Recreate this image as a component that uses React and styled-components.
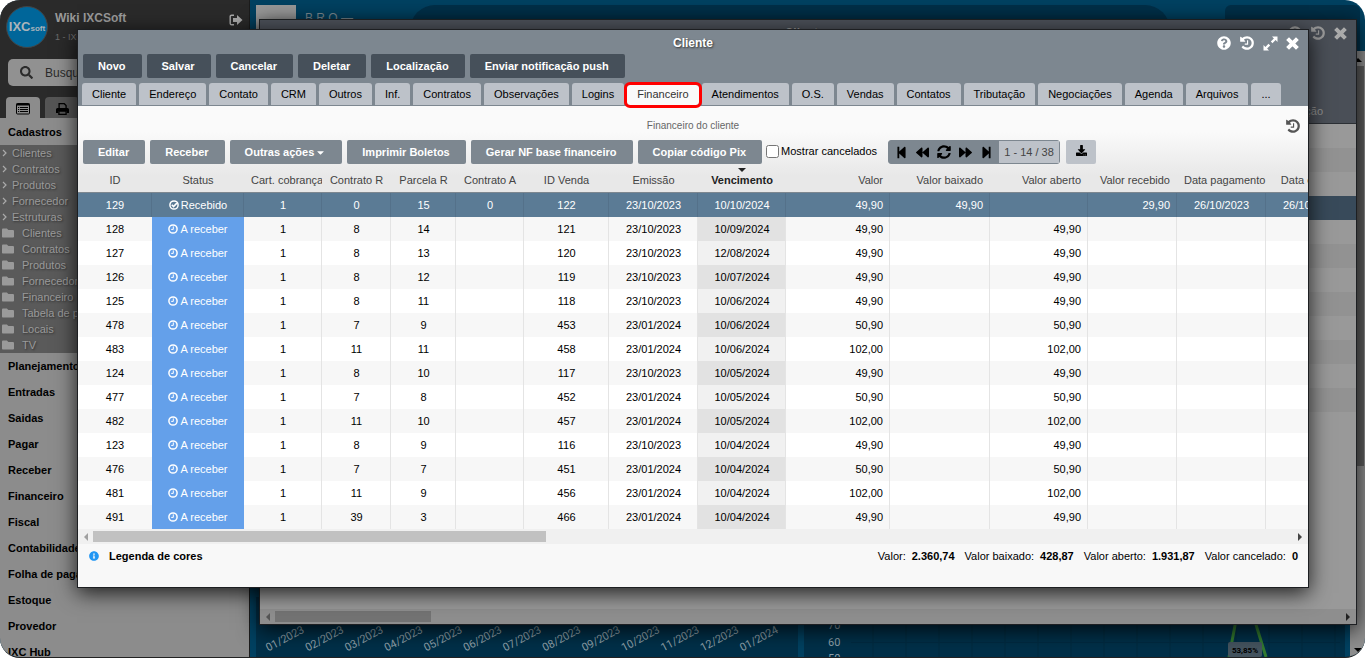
import React from 'react'
import styled, { createGlobalStyle, css } from 'styled-components'
import {
  FaBackward,
  FaCaretDown,
  FaDownload,
  FaFolder,
  FaForward,
  FaInfoCircle,
  FaQuestionCircle,
  FaSearch,
  FaStepBackward,
  FaStepForward,
  FaSyncAlt,
} from 'react-icons/fa'

const colors = {
  slate: '#7d8790',
  slateDark: '#46505a',
  tab: '#bdc2c9',
  selected: '#5b7b95',
  receivable: '#64a0ea',
  navy: '#003049',
  blue: '#004161',
}

const GlobalStyle = createGlobalStyle`
  * {
    box-sizing: border-box;
  }

  body {
    margin: 0;
    background-color: #fff;
    color: #000;
    font-family: 'Liberation Sans', Arial, sans-serif;
    font-size: 11px;
  }

  button, input {
    font-family: inherit;
  }
`

const Desktop = styled.div`
  position: relative;
  display: flex;
  height: 100vh;
  overflow: hidden;
  border-radius: 20px;
  border-bottom: 1px solid #222;
  background-color: ${colors.blue};
`

/* ---------- sidebar ---------- */

const Sidebar = styled.aside`
  flex: 0 0 250px;
  overflow: hidden;
  background-color: #8c8c8c;
  border-right: 1px solid #1c1c1c;
`

const SidebarTop = styled.div`
  height: 118px;
  background-color: #2a2a2a;
`

const User = styled.div`
  display: flex;
  align-items: center;
  gap: 7px;
  height: 53px;
  padding: 0 6px;

  > button {
    margin-bottom: 14px;
  }
`

const Logo = styled.div`
  display: flex;
  flex: none;
  align-items: baseline;
  justify-content: center;
  width: 42px;
  height: 42px;
  border: 1px solid #444;
  border-radius: 50%;
  background-color: #00669a;
  color: #aab4ba;
  font-size: 13px;
  font-weight: bold;
  line-height: 40px;

  > small {
    font-size: 8px;
  }
`

const UserText = styled.div`
  flex: 1;
  padding-top: 3px;
  color: #6d6d6d;
  font-size: 9px;
  line-height: 19px;
  white-space: nowrap;

  > strong {
    display: block;
    color: #9a9a9a;
    font-size: 12px;
  }
`

const IconButton = styled.button`
  display: flex;
  padding: 0;
  border: 0;
  background: none;
  color: ${props => props.$color || '#fff'};
`

const SearchBox = styled.label`
  display: flex;
  align-items: center;
  gap: 12px;
  height: 27px;
  margin: 6px 8px 0;
  padding: 0 12px;
  border-radius: 5px;
  background-color: #919191;
  color: #2b2b2b;

  > svg {
    flex: none;
  }

  > input {
    width: 100%;
    padding: 0;
    border: 0;
    outline: 0;
    background: none;
    font-size: 12px;
  }

  > input::placeholder {
    color: #2b2b2b;
  }
`

const SideTabs = styled.div`
  display: flex;
  gap: 5px;
  padding: 11px 6px 0;
`

const SideTab = styled.button`
  display: flex;
  align-items: center;
  justify-content: center;
  width: 34px;
  height: 21px;
  padding: 2px 0 0;
  border: 0;
  border-radius: 4px 4px 0 0;
  background-color: ${props => (props.$active ? '#8c8c8c' : '#555')};
  color: #000;
`

const MenuTitle = styled.a`
  display: block;
  height: 26px;
  padding-left: 8px;
  color: #000;
  font-weight: bold;
  line-height: 26px;
  text-decoration: none;
  white-space: nowrap;
`

const FirstMenuTitle = styled(MenuTitle)`
  height: 27px;
  line-height: 28px;
`

const SubMenu = styled.div`
  background-color: #5a5a5a;
`

const SubMenuItem = styled.a`
  display: flex;
  align-items: center;
  gap: ${props => (props.$folder ? 8 : 5)}px;
  height: 16px;
  padding-left: 2px;
  color: #9a9a9a;
  text-decoration: none;
  text-shadow: 1px 1px 2px #333;
  white-space: nowrap;

  > svg {
    flex: none;
  }
`

/* ---------- dashboard behind the windows ---------- */

const Dashboard = styled.main`
  display: flex;
  flex: 1;
  flex-direction: column;
  min-width: 0;
`

const DashboardTop = styled.div`
  display: flex;
  flex: none;
  align-items: flex-start;
  height: 51px;
  padding: 5px 5px 0 6px;
`

const Thumb = styled.div`
  width: 40px;
  height: 46px;
  background-color: #999;
`

const Brand = styled.div`
  width: 114px;
  padding: 6px 0 0 9px;
  color: #7d8b93;
  font-size: 12px;
  white-space: nowrap;
`

const TopCard = styled.div`
  flex: ${props => props.$grow};
  height: 46px;
  margin-right: ${props => props.$gap}px;
  border-radius: ${props => props.$radius}px ${props => props.$radius}px 0 0;
  background-color: ${colors.navy};
`

const DashboardBody = styled.div`
  display: flex;
  flex: 1;
  min-height: 0;
`

const Charts = styled.div`
  display: flex;
  flex: 1;
  align-items: flex-end;
  gap: 6px;
  min-width: 0;
  padding: 0 5px 0 6px;
`

const ChartPanel = styled.div`
  flex: 1 1 0;
  min-width: 0;
  height: 60px;
  background-color: ${colors.navy};

  > svg {
    display: block;
  }

  text {
    fill: #8fa0aa;
    font-family: Roboto, sans-serif;
    font-size: 11px;
  }
`

const VerticalScroll = styled.div`
  display: flex;
  flex: 0 0 15px;
  flex-direction: column;
  align-items: center;
  justify-content: space-between;
  padding: 5px 0 3px;
  background-color: #8e8e8e;
`

const VerticalThumb = styled.div`
  flex: 0 0 400px;
  width: 13px;
  margin: 2px 0 auto;
  background-color: #5e5e5e;
`

/* ---------- windows ---------- */

const Window = styled.section`
  position: absolute;
  top: ${props => props.$top}px;
  right: ${props => props.$right}px;
  left: ${props => props.$left}px;
  overflow: hidden;
  border: 1px solid #1d1f22;
  box-shadow: 0 5px 20px rgba(0, 0, 0, 0.8);
`

const TitleBar = styled.header`
  display: grid;
  grid-template-columns: 1fr auto 1fr;
  align-items: center;
  height: 24px;
  padding: 2px 9px 0;
`

const Title = styled.h1`
  grid-column: 2;
  margin: 0;
  color: ${props => (props.$dim ? '#999' : '#fff')};
  font-size: 12px;
  text-shadow: 1px 1px 2px #333;
`

const WindowControls = styled.div`
  display: flex;
  align-items: center;
  justify-content: flex-end;
  gap: 8px;
`

const BackHeader = styled.div`
  height: 104px;
  border-bottom: 1px solid #2c3035;
  background-color: #4a4f57;
`

const BackLabel = styled.div`
  padding: 60px 33px 0 0;
  color: #8f8f8f;
  line-height: 14px;
  text-align: right;
`

const BackRow = styled.div`
  height: 24px;
  background-color: ${props =>
    props.$selected ? '#384a5a' : props.$shaded ? '#929292' : '#999'};
`

const BackFiller = styled.div`
  height: 197px;
  background-color: #999;
`

const FrontHeader = styled.div`
  background-color: ${colors.slate};
`

const Actions = styled.div`
  display: flex;
  gap: 5px;
  padding: 0 5px;
`

const Button = styled.button`
  display: flex;
  align-items: center;
  gap: 1px;
  height: 24px;
  padding: 0 16px 0 15px;
  border: 0;
  border-radius: 2px;
  background-color: ${props =>
    props.$dark ? colors.slateDark : colors.slate};
  color: #fff;
  font-size: 11px;
  font-weight: bold;
  white-space: nowrap;
`

const Tabs = styled.nav`
  display: flex;
  align-items: flex-end;
  gap: 3px;
  padding: 5px 4px 0;
  border-bottom: 1px solid ${colors.slate};
`

const Tab = styled.button`
  height: 22px;
  padding: 0 10px;
  border: 0;
  border-radius: 3px 3px 0 0;
  background-color: ${colors.tab};
  color: #000;
  font-size: 11px;
  white-space: nowrap;

  ${props =>
    props.$active &&
    css`
      z-index: 1;
      height: 20px;
      padding-bottom: 3px;
      background-color: #fafafa;
      color: #333;
      outline: 3px solid #f00;
      border-radius: 3px;
    `}
`

const Content = styled.div`
  background: #fff linear-gradient(#fafafa 30%, #e8e8e8 80%) no-repeat 0 0 /
    100% 87px;
`

const SectionHead = styled.div`
  display: grid;
  grid-template-columns: 1fr auto 1fr;
  align-items: center;
  height: 34px;
  padding: 5px 7px 0;
`

const SectionTitle = styled.h2`
  grid-column: 2;
  margin: 0;
  color: #666;
  font-size: 10px;
  font-weight: normal;
`

const Toolbar = styled.div`
  display: flex;
  align-items: center;
  height: 28px;
  padding: 0 5px 4px;
`

const ToolbarActions = styled.div`
  display: flex;
  gap: 5px;
`

const Checkbox = styled.label`
  display: flex;
  align-items: center;
  gap: 2px;
  margin: 0 11px 0 4px;
  padding-bottom: 2px;
  white-space: nowrap;

  > input {
    width: 13px;
    height: 13px;
    margin: 0;
  }
`

const Pager = styled.div`
  display: flex;
  height: 24px;
  margin-right: 6px;
  border: 1px solid ${colors.slate};
  border-radius: 3px;
  background-color: ${colors.slate};
`

const PagerButtons = styled.div`
  display: flex;
  align-items: center;
  justify-content: space-between;
  width: 110px;
  padding: 0 6px;
`

const PagerText = styled.span`
  width: 60px;
  background-color: ${colors.tab};
  color: #444;
  line-height: 22px;
  text-align: center;
`

const DownloadButton = styled.button`
  display: flex;
  align-items: center;
  justify-content: center;
  width: 30px;
  height: 24px;
  padding: 0 0 4px;
  border: 0;
  border-radius: 2px;
  background-color: ${colors.tab};
  color: #000;
`

const TableWrap = styled.div`
  overflow: hidden;
`

const Table = styled.table`
  width: 1277px;
  border-collapse: separate;
  border-spacing: 0;
  table-layout: fixed;
`

const Th = styled.th`
  height: 25px;
  padding: 0 7px;
  border-bottom: 1px solid ${colors.slate};
  color: ${props => (props.$sorted ? '#222' : '#444')};
  font-weight: ${props => (props.$sorted ? 'bold' : 'normal')};
  overflow: hidden;
  text-align: ${props => props.$align};
  white-space: nowrap;
`

const SortMark = styled.svg`
  display: block;
  margin: -6px auto 2px;
`

const Td = styled.td`
  height: 24px;
  padding: 0 6px 0 7px;
  border-right: 1px solid ${props => (props.$blank ? 'transparent' : '#e4e4e4')};
  text-align: ${props => props.$align};
  white-space: nowrap;
`

const Tr = styled.tr`
  background-color: #fff;

  &:nth-child(even) {
    background-color: #f7f7f7;
  }

  &:nth-child(even) > td.sorted {
    background-color: #e2e2e2;
  }

  > td.sorted {
    background-color: #f1f1f1;
  }

  > td.status {
    background-color: ${colors.receivable};
    color: #fff;
  }

  ${props =>
    props.$selected &&
    css`
      && ,
      && > td.sorted,
      && > td.status {
        background-color: ${colors.selected};
        color: #fff;
      }

      && > td {
        border-right-color: #54718a;
      }
    `}
`

const Status = styled.span`
  display: inline-flex;
  align-items: center;
  gap: 2px;
`

const HorizontalScroll = styled.div`
  display: flex;
  align-items: center;
  gap: 3px;
  height: 15px;
  padding: 0 4px;
  background-color: ${props => (props.$dim ? '#8e8e8e' : '#f0f0f0')};
  color: ${props => (props.$dim ? '#555' : '#a0a0a0')};

  > svg:last-child {
    margin-left: auto;
    color: ${props => (props.$dim ? '#222' : '#444')};
  }
`

const HorizontalThumb = styled.div`
  width: ${props => props.$width}px;
  height: 11px;
  background-color: ${props => (props.$dim ? '#737373' : '#c1c1c1')};
`

const Footer = styled.footer`
  display: flex;
  align-items: flex-start;
  justify-content: space-between;
  height: 43px;
  padding: 5px 10px 0 11px;
  background-color: #f8f8f8;
  line-height: 14px;
`

const Legend = styled.a`
  display: flex;
  align-items: center;
  gap: 10px;
  color: #000;
  font-weight: bold;
  text-decoration: none;
`

const Totals = styled.div`
  display: flex;
  gap: 10px;

  > span {
    display: flex;
    gap: 6px;
  }
`

/* ---------- icons ---------- */

const HistoryIcon = () => (
  <svg width="16" height="16" viewBox="0 0 1792 1792" fill="currentColor">
    <path d="M1664 896q0 156-61 298t-164 245-245 164-298 61q-172 0-327-72.5t-264-204.5q-7-10-6.5-22.5t8.5-20.5l137-138q10-9 25-9 16 2 23 12 73 95 179 147t225 52q104 0 198.5-40.5t163.5-109.5 109.5-163.5 40.5-198.5-40.5-198.5-109.5-163.5-163.5-109.5-198.5-40.5q-98 0-188 35.5t-160 101.5l137 138q31 30 14 69-17 40-59 40h-448q-26 0-45-19t-19-45v-448q0-42 40-59 39-17 69 14l130 129q107-101 244.5-156.5t284.5-55.5q156 0 298 61t245 164 164 245 61 298zm-640-288v448q0 14-9 23t-23 9h-320q-14 0-23-9t-9-23v-64q0-14 9-23t23-9h224v-352q0-14 9-23t23-9h64q14 0 23 9t9 23z" />
  </svg>
)

const CloseIcon = () => (
  <svg width="13" height="13" viewBox="0 0 13 13" stroke="currentColor">
    <path d="M1.6 1.6l9.8 9.8M11.4 1.6l-9.8 9.8" strokeWidth="4" />
  </svg>
)

const ExpandIcon = () => (
  <svg width="15" height="15" viewBox="0 0 15 15" fill="currentColor">
    <path d="M9 0.5h5.5V6l-1.9-1.9-3.1 3.1-1.7-1.7 3.1-3.1zM6 14.5H0.5V9l1.9 1.9 3.1-3.1 1.7 1.7-3.1 3.1z" />
  </svg>
)

const ExitIcon = () => (
  <svg width="14" height="12" viewBox="0 0 14 12">
    <path
      d="M5 1.2H2.6Q1.2 1.2 1.2 2.6v6.8q0 1.4 1.4 1.4H5"
      fill="none"
      stroke="currentColor"
      strokeWidth="1.4"
    />
    <path d="M4 4h4V1l5.5 5L8 11V8H4z" fill="currentColor" />
  </svg>
)

const ListIcon = () => (
  <svg width="14" height="12" viewBox="0 0 14 12" stroke="currentColor">
    <rect x="0.5" y="0.5" width="13" height="10.5" rx="1" fill="none" />
    <path d="M0.5 1.5h13" strokeWidth="2" />
    <path d="M2 4.5h1.2M4 4.5h8M2 6.5h1.2M4 6.5h8M2 8.5h1.2M4 8.5h8" />
  </svg>
)

const PrinterIcon = () => (
  <svg width="13" height="12" viewBox="0 0 13 12">
    <path
      d="M3.1 5.5V0.7h5.2l1.8 1.8v3"
      fill="none"
      stroke="currentColor"
      strokeWidth="1.3"
    />
    <path
      d="M1.5 5h10Q13 5 13 6.5V10h-2.3V8H2.3v2H0V6.5Q0 5 1.5 5z"
      fill="currentColor"
    />
    <path
      d="M2.9 8h7.2v3.3H2.9z"
      fill="none"
      stroke="currentColor"
      strokeWidth="1.3"
    />
  </svg>
)

const ClockIcon = () => (
  <svg width="10" height="10" viewBox="0 0 10 10" fill="none" stroke="#fff">
    <circle cx="5" cy="5" r="4.1" strokeWidth="1.5" />
    <path d="M5.3 2.4v3H3.2" strokeWidth="1" />
  </svg>
)

const CheckIcon = () => (
  <svg width="10" height="10" viewBox="0 0 10 10" fill="none" stroke="#fff">
    <circle cx="5" cy="5" r="4.1" strokeWidth="1.5" />
    <path d="M2.8 4.8l1.7 1.7 3.4-3.4" strokeWidth="1.6" />
  </svg>
)

const ChevronIcon = () => (
  <svg width="5" height="8" viewBox="0 0 5 8" fill="none" stroke="#aaa">
    <path d="M1 1l3 3-3 3" strokeWidth="1.2" />
  </svg>
)

const Arrow = ({ to }) => {
  const d = {
    left: 'M6 0v8L2 4z',
    right: 'M2 0v8l4-4z',
    up: 'M0 6h8L4 2z',
    down: 'M0 2h8L4 6z',
  }[to]
  return (
    <svg width="8" height="8" viewBox="0 0 8 8" fill="currentColor">
      <path d={d} />
    </svg>
  )
}

/* ---------- data ---------- */

const links = ['Clientes', 'Contratos', 'Produtos', 'Fornecedor', 'Estruturas']
const folders = [
  'Clientes',
  'Contratos',
  'Produtos',
  'Fornecedor',
  'Financeiro',
  'Tabela de preços',
  'Locais',
  'TV',
]
const menu = [
  'Planejamento',
  'Entradas',
  'Saidas',
  'Pagar',
  'Receber',
  'Financeiro',
  'Fiscal',
  'Contabilidade',
  'Folha de pagamento',
  'Estoque',
  'Provedor',
  'IXC Hub',
]
const months = [
  '01/2023',
  '02/2023',
  '03/2023',
  '04/2023',
  '05/2023',
  '06/2023',
  '07/2023',
  '08/2023',
  '09/2023',
  '10/2023',
  '11/2023',
  '12/2023',
  '01/2024',
]
const actions = [
  'Novo',
  'Salvar',
  'Cancelar',
  'Deletar',
  'Localização',
  'Enviar notificação push',
]
const tabs = [
  'Cliente',
  'Endereço',
  'Contato',
  'CRM',
  'Outros',
  'Inf.',
  'Contratos',
  'Observações',
  'Logins',
  'Financeiro',
  'Atendimentos',
  'O.S.',
  'Vendas',
  'Contatos',
  'Tributação',
  'Negociações',
  'Agenda',
  'Arquivos',
  '...',
]
const columns = [
  { label: 'ID', width: 74, blank: true },
  { label: 'Status', width: 92, className: 'status', blank: true },
  { label: 'Cart. cobrança', width: 78 },
  { label: 'Contrato R', width: 69 },
  { label: 'Parcela R', width: 65 },
  { label: 'Contrato A', width: 68 },
  { label: 'ID Venda', width: 85 },
  { label: 'Emissão', width: 89 },
  { label: 'Vencimento', width: 88, className: 'sorted' },
  { label: 'Valor', width: 104, align: 'right' },
  { label: 'Valor baixado', width: 100, align: 'right' },
  { label: 'Valor aberto', width: 98, align: 'right' },
  { label: 'Valor recebido', width: 89, align: 'right' },
  { label: 'Data pagamento', width: 89 },
  { label: 'Data crédito', width: 89 },
]

const open = (id, contract, parcel, sale, issued, due, value) => [
  id,
  'A receber',
  '1',
  contract,
  parcel,
  '',
  sale,
  issued,
  due,
  value,
  '',
  value,
  '',
  '',
  '',
]

const rows = [
  [
    '129',
    'Recebido',
    '1',
    '0',
    '15',
    '0',
    '122',
    '23/10/2023',
    '10/10/2024',
    '49,90',
    '49,90',
    '',
    '29,90',
    '26/10/2023',
    '26/10/2023',
  ],
  open('128', '8', '14', '121', '23/10/2023', '10/09/2024', '49,90'),
  open('127', '8', '13', '120', '23/10/2023', '12/08/2024', '49,90'),
  open('126', '8', '12', '119', '23/10/2023', '10/07/2024', '49,90'),
  open('125', '8', '11', '118', '23/10/2023', '10/06/2024', '49,90'),
  open('478', '7', '9', '453', '23/01/2024', '10/06/2024', '50,90'),
  open('483', '11', '11', '458', '23/01/2024', '10/06/2024', '102,00'),
  open('124', '8', '10', '117', '23/10/2023', '10/05/2024', '49,90'),
  open('477', '7', '8', '452', '23/01/2024', '10/05/2024', '50,90'),
  open('482', '11', '10', '457', '23/01/2024', '10/05/2024', '102,00'),
  open('123', '8', '9', '116', '23/10/2023', '10/04/2024', '49,90'),
  open('476', '7', '7', '451', '23/01/2024', '10/04/2024', '50,90'),
  open('481', '11', '9', '456', '23/01/2024', '10/04/2024', '102,00'),
  open('491', '39', '3', '466', '23/01/2024', '10/04/2024', '49,90'),
]

const totals = [
  ['Valor:', '2.360,74'],
  ['Valor baixado:', '428,87'],
  ['Valor aberto:', '1.931,87'],
  ['Valor cancelado:', '0'],
]

/* ---------- parts ---------- */

const SideMenu = () => (
  <Sidebar>
    <SidebarTop>
      <User>
        <Logo>
          IXC<small>soft</small>
        </Logo>
        <UserText>
          <strong>Wiki IXCSoft</strong>1 - IXCSoft
        </UserText>
        <IconButton $color="#aaa" aria-label="Sair">
          <ExitIcon />
        </IconButton>
      </User>
      <SearchBox>
        <FaSearch size={13} />
        <input type="text" placeholder="Busque aqui" aria-label="Busca" />
      </SearchBox>
      <SideTabs>
        <SideTab $active aria-label="Menu">
          <ListIcon />
        </SideTab>
        <SideTab aria-label="Relatórios">
          <PrinterIcon />
        </SideTab>
      </SideTabs>
    </SidebarTop>
    <FirstMenuTitle href="#cadastros">Cadastros</FirstMenuTitle>
    <SubMenu>
      {links.map(name => (
        <SubMenuItem key={name} href="#cadastros">
          <ChevronIcon />
          {name}
        </SubMenuItem>
      ))}
      {folders.map(name => (
        <SubMenuItem key={name} href="#cadastros" $folder>
          <FaFolder size={12} />
          {name}
        </SubMenuItem>
      ))}
    </SubMenu>
    {menu.map(name => (
      <MenuTitle key={name} href="#menu">
        {name}
      </MenuTitle>
    ))}
  </Sidebar>
)

const MonthChart = () => (
  <ChartPanel>
    <svg width="541" height="60">
      {months.map((month, i) => (
        <text
          key={month}
          textAnchor="end"
          transform={`translate(${49 + i * 39.5} 35) rotate(-28)`}
        >
          {month}
        </text>
      ))}
    </svg>
  </ChartPanel>
)

const gridLines = Array.from({ length: 15 }, (_, i) => 69 + i * 33)

const PercentChart = () => (
  <ChartPanel>
    <svg width="541" height="60">
      {gridLines.map(x => (
        <path key={x} d={`M${x} 0V60`} stroke="#002a41" />
      ))}
      <path d="M47 45.5H536" stroke="#002a41" />
      <text x="24" y="32">
        70
      </text>
      <text x="24" y="49">
        60
      </text>
      <text x="24" y="65">
        50
      </text>
      <path
        d="M425 60L433 18Q441 -2 449 18L462 60"
        fill="none"
        stroke="#327a2f"
        strokeWidth="3"
      />
      <rect x="424" y="45" width="34" height="15" rx="2" fill="#44545f" />
      <text
        x="441"
        y="56"
        textAnchor="middle"
        style={{ fill: '#000', fontSize: 8, fontWeight: 'bold' }}
      >
        53,85%
      </text>
    </svg>
  </ChartPanel>
)

const BackWindow = () => (
  <Window $top={19} $left={259} $right={8}>
    <BackHeader>
      <TitleBar>
        <Title as="h2" $dim>
          Clientes
        </Title>
        <WindowControls>
          <IconButton $color="#999" aria-label="Ajuda">
            <FaQuestionCircle size={14} />
          </IconButton>
          <IconButton $color="#999" aria-label="Histórico">
            <HistoryIcon />
          </IconButton>
          <IconButton $color="#aaa" aria-label="Fechar">
            <CloseIcon />
          </IconButton>
        </WindowControls>
      </TitleBar>
      <BackLabel>Ação</BackLabel>
    </BackHeader>
    {Array.from({ length: 12 }, (_, i) => (
      <BackRow key={i} $shaded={i % 2 === 1} $selected={i === 3} />
    ))}
    <BackFiller />
    <HorizontalScroll $dim>
      <Arrow to="left" />
      <HorizontalThumb $dim $width={156} />
      <Arrow to="right" />
    </HorizontalScroll>
  </Window>
)

const Cell = ({ column, value }) => (
  <Td
    className={column.className}
    $align={column.align || 'center'}
    $blank={column.blank}
  >
    {column.className === 'status' ? (
      <Status>
        {value === 'Recebido' ? <CheckIcon /> : <ClockIcon />}
        {value}
      </Status>
    ) : (
      value
    )}
  </Td>
)

const FinanceTable = () => (
  <TableWrap>
    <Table>
      <colgroup>
        {columns.map(column => (
          <col key={column.label} width={column.width} />
        ))}
      </colgroup>
      <thead>
        <tr>
          {columns.map(column => (
            <Th
              key={column.label}
              $align={column.align || 'center'}
              $sorted={column.className === 'sorted'}
            >
              {column.className === 'sorted' ? (
                <SortMark width="8" height="4" viewBox="0 0 8 4">
                  <path d="M0 0h8L4 4z" fill="#222" />
                </SortMark>
              ) : null}
              {column.label}
            </Th>
          ))}
        </tr>
      </thead>
      <tbody>
        {rows.map((row, i) => (
          <Tr key={row[0]} $selected={i === 0}>
            {columns.map((column, c) => (
              <Cell key={column.label} column={column} value={row[c]} />
            ))}
          </Tr>
        ))}
      </tbody>
    </Table>
  </TableWrap>
)

const ClientWindow = () => (
  <Window $top={29} $left={77} $right={56}>
    <FrontHeader>
      <TitleBar>
        <Title>Cliente</Title>
        <WindowControls>
          <IconButton aria-label="Ajuda">
            <FaQuestionCircle size={14} />
          </IconButton>
          <IconButton aria-label="Histórico">
            <HistoryIcon />
          </IconButton>
          <IconButton aria-label="Expandir">
            <ExpandIcon />
          </IconButton>
          <IconButton aria-label="Fechar">
            <CloseIcon />
          </IconButton>
        </WindowControls>
      </TitleBar>
      <Actions>
        {actions.map(name => (
          <Button key={name} $dark>
            {name}
          </Button>
        ))}
      </Actions>
      <Tabs>
        {tabs.map(name => (
          <Tab key={name} $active={name === 'Financeiro'}>
            {name}
          </Tab>
        ))}
      </Tabs>
    </FrontHeader>
    <Content>
      <SectionHead>
        <SectionTitle>Financeiro do cliente</SectionTitle>
        <WindowControls>
          <IconButton $color="#555" aria-label="Histórico">
            <HistoryIcon />
          </IconButton>
        </WindowControls>
      </SectionHead>
      <Toolbar>
        <ToolbarActions>
          <Button>Editar</Button>
          <Button>Receber</Button>
          <Button>
            Outras ações <FaCaretDown size={11} />
          </Button>
          <Button>Imprimir Boletos</Button>
          <Button>Gerar NF base financeiro</Button>
          <Button>Copiar código Pix</Button>
        </ToolbarActions>
        <Checkbox>
          <input type="checkbox" />
          Mostrar cancelados
        </Checkbox>
        <Pager>
          <PagerButtons>
            <IconButton $color="#000" aria-label="Primeira página">
              <FaStepBackward size={13} />
            </IconButton>
            <IconButton $color="#000" aria-label="Página anterior">
              <FaBackward size={13} />
            </IconButton>
            <IconButton $color="#000" aria-label="Atualizar">
              <FaSyncAlt size={14} />
            </IconButton>
            <IconButton $color="#000" aria-label="Próxima página">
              <FaForward size={13} />
            </IconButton>
            <IconButton $color="#000" aria-label="Última página">
              <FaStepForward size={13} />
            </IconButton>
          </PagerButtons>
          <PagerText>1 - 14 / 38</PagerText>
        </Pager>
        <DownloadButton aria-label="Exportar">
          <FaDownload size={11} />
        </DownloadButton>
      </Toolbar>
      <FinanceTable />
    </Content>
    <HorizontalScroll>
      <Arrow to="left" />
      <HorizontalThumb $width={453} />
      <Arrow to="right" />
    </HorizontalScroll>
    <Footer>
      <Legend href="#legenda">
        <FaInfoCircle size={10} color="#2196f3" />
        Legenda de cores
      </Legend>
      <Totals>
        {totals.map(([label, value]) => (
          <span key={label}>
            {label} <b>{value}</b>
          </span>
        ))}
      </Totals>
    </Footer>
  </Window>
)

export default function App() {
  return (
    <>
      <GlobalStyle />
      <Desktop>
        <SideMenu />
        <Dashboard>
          <DashboardTop>
            <Thumb />
            <Brand>B R O —</Brand>
            <TopCard $grow={760} $gap={55} $radius={25} />
            <TopCard $grow={135} $gap={0} $radius={6} />
          </DashboardTop>
          <DashboardBody>
            <Charts>
              <MonthChart />
              <PercentChart />
            </Charts>
            <VerticalScroll>
              <Arrow to="up" />
              <VerticalThumb />
              <Arrow to="down" />
            </VerticalScroll>
          </DashboardBody>
        </Dashboard>
        <BackWindow />
        <ClientWindow />
      </Desktop>
    </>
  )
}
